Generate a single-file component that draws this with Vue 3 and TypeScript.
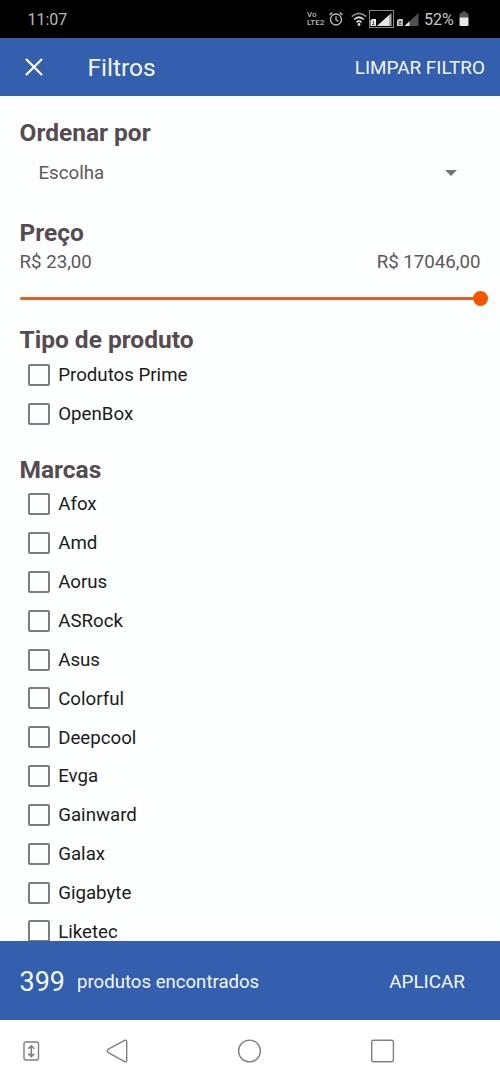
<script setup lang="ts">
import { ref } from 'vue'

interface FilterGroup {
  title: string
  options: string[]
}

const groups: FilterGroup[] = [
  { title: 'Tipo de produto', options: ['Produtos Prime', 'OpenBox'] },
  {
    title: 'Marcas',
    options: [
      'Afox', 'Amd', 'Aorus', 'ASRock', 'Asus', 'Colorful',
      'Deepcool', 'Evga', 'Gainward', 'Galax', 'Gigabyte', 'Liketec',
    ],
  },
]

const selected = ref<string[]>([])

function toggle(option: string): void {
  selected.value = selected.value.includes(option)
    ? selected.value.filter((o) => o !== option)
    : [...selected.value, option]
}
</script>

<template>
  <div class="screen">
    <div class="status">
      <span class="clock">11:07</span>
      <div class="indicators">
        <span class="volte"><span>Vo</span><span>LTE2</span></span>
        <svg class="alarm" width="14" height="16" viewBox="0 0 14 16" fill="none" stroke="#c4c4c4" stroke-width="1.3">
          <circle cx="7" cy="8.5" r="5.5" />
          <path d="M7 5.2v3.6l2.3 1.4M.6 4L3.3 1.6M13.4 4l-2.7-2.4" />
        </svg>
        <svg class="wifi" width="16" height="16" viewBox="0 0 16 16" fill="none" stroke="#dcdcdc" stroke-width="1.7">
          <path d="M.7 5.6Q8-1 15.300 5.600" stroke="#8c8c8c" />
          <path d="M3.200 8.500Q8 4 12.800 8.500M5.500 11.300Q8 9 10.500 11.300" />
          <circle cx="8" cy="13.500" r="1.400" fill="#dcdcdc" stroke="none" />
        </svg>
        <svg class="signals" width="52" height="20" viewBox="0 0 52 20">
          <rect x="1.500" y="1.500" width="24" height="17" fill="none" stroke="#858585" />
          <path d="M9 17L23.500 4V17z" fill="#a8a8a8" />
          <path d="M9 17L21 6.200V17z" fill="#e6e6e6" />
          <path d="M2.500 11.500l1.500-1.500H8V17H2.500z" fill="#ededed" />
          <path d="M4.500 12.300h1V15.500M4 15.500h2.500" fill="none" stroke="#333" stroke-width=".8" />
          <path d="M36.500 17L50.500 4V17z" fill="#505050" />
          <path d="M36.500 17l5-4.700V17z" fill="#e2e2e2" />
          <path d="M29 11.500l1.500-1.500H34.800V17H29z" fill="#d4d4d4" />
          <path d="M30.500 12.300H33v1.500h-2v1.700h2.300" fill="none" stroke="#333" stroke-width=".8" />
        </svg>
        <span class="percent">52%</span>
        <svg class="battery" width="10" height="16" viewBox="0 0 10 16">
          <path d="M3 .5h4V2.300H9.500V7H.5V2.300H3z" fill="#555" />
          <path d="M.5 6.500h9v7q0 1.500-1.500 1.500H2Q.5 15 .5 13.500z" fill="#e6e6e6" />
        </svg>
      </div>
    </div>

    <header class="toolbar">
      <svg class="close" width="18" height="18" viewBox="0 0 18 18" fill="none" stroke="#fff" stroke-width="2.200">
        <path d="M1 1l16 16M17 1L1 17" />
      </svg>
      <span class="title">Filtros</span>
      <button class="clear">LIMPAR FILTRO</button>
    </header>

    <main class="content">
      <section class="sort">
        <h2>Ordenar por</h2>
        <div class="select">
          <span>Escolha</span>
          <svg width="12" height="6" viewBox="0 0 12 6"><path d="M0 0h12L6 6z" fill="#757575" /></svg>
        </div>
      </section>

      <section class="price">
        <h2>Preço</h2>
        <div class="range"><span>R$ 23,00</span><span>R$ 17046,00</span></div>
        <div class="slider"><span class="track"></span><span class="thumb"></span></div>
      </section>

      <section v-for="group in groups" :key="group.title" class="group">
        <h2>{{ group.title }}</h2>
        <div v-for="option in group.options" :key="option" class="option" @click="toggle(option)">
          <span class="box" :class="{ checked: selected.includes(option) }"></span>
          <span class="label">{{ option }}</span>
        </div>
      </section>
    </main>

    <footer class="results">
      <span class="count">399</span>
      <span class="found">produtos encontrados</span>
      <button class="apply">APLICAR</button>
    </footer>

    <nav class="nav">
      <svg width="500" height="62" viewBox="0 0 500 62" fill="none" stroke="#808080" stroke-width="1.400">
        <rect x="24" y="22" width="14.500" height="18" rx="2" />
        <path d="M31.300 26v10.400M28.300 28.800l3-3 3 3M28.300 33.600l3 3 3-3" stroke-width="1.600" />
        <path d="M108 29.400L124.500 20.400Q126.700 19.500 126.700 21.700V40.300Q126.700 42.500 124.500 41.500L108 32.400Q106.500 31 108 29.400z" />
        <circle cx="249.500" cy="31" r="10.900" />
        <rect x="371.700" y="20.300" width="21.700" height="21.500" rx="2" />
      </svg>
    </nav>
  </div>
</template>

<style>
body {
  margin: 0;
}
</style>

<style scoped>
.screen {
  width: 500px;
  height: 1082px;
  display: flex;
  flex-direction: column;
  overflow: hidden;
  background: #fdfefe;
  font-family: Roboto, "Liberation Sans", sans-serif;
  font-size: 18.700px;
  color: #5f575c;
}
.status {
  flex: none;
  height: 37.500px;
  padding: 0 31px 0 27.500px;
  box-sizing: border-box;
  display: flex;
  align-items: center;
  justify-content: space-between;
  background: #000;
  color: #b8b8b8;
  font-size: 16px;
}
.clock {
  padding-top: 2px;
}
.indicators {
  display: flex;
  align-items: center;
  height: 38px;
}
.volte {
  display: flex;
  flex-direction: column;
  width: 18px;
  font-size: 8px;
  line-height: 7.500px;
  font-weight: 500;
  white-space: nowrap;
}
.alarm {
  margin-left: 4px;
}
.wifi {
  margin-left: 8px;
}
.signals {
  margin-left: 1px;
}
.percent {
  margin-left: 4px;
  width: 30px;
  padding-top: 2px;
  color: #c8c8c8;
}
.battery {
  margin-left: 5px;
}
.toolbar {
  flex: none;
  height: 58.200px;
  box-sizing: border-box;
  padding: 1px 15px 0 25px;
  display: flex;
  align-items: center;
  background: #345eae;
  color: #f2f8ff;
}
.title {
  margin-left: 44.500px;
  font-size: 24.500px;
}
button {
  border: 0;
  padding: 0;
  background: none;
  font: inherit;
  font-size: 18.900px;
  color: inherit;
  margin-left: auto;
}
.content {
  flex: 1;
  min-height: 0;
  overflow: hidden;
  padding: 22px 19.500px 0;
}
h2 {
  margin: 0;
  font-size: 24.500px;
  line-height: 30px;
  font-weight: 700;
  color: #564b53;
}
.sort {
  height: 100.500px;
}
.select {
  height: 50px;
  display: flex;
  align-items: center;
  justify-content: space-between;
  padding: 0 23.500px 0 19px;
}
.price {
  height: 107px;
}
.range {
  display: flex;
  justify-content: space-between;
  line-height: 28.500px;
}
.slider {
  height: 14px;
  margin-top: 14.500px;
  display: flex;
  align-items: center;
  margin-right: -7.500px;
}
.track {
  flex: 1;
  height: 3px;
  border-radius: 2px 0 0 2px;
  background: #ea5a1c;
}
.thumb {
  width: 15px;
  height: 15px;
  border-radius: 50%;
  background: #f75400;
}
.group {
  margin-bottom: 21.500px;
}
.option {
  height: 38.850px;
  display: flex;
  align-items: center;
  gap: 8.500px;
  padding-left: 8.200px;
  color: #1b1b1b;
}
.label {
  line-height: 20px;
  padding-top: .6px;
}
.group h2 {
  padding-bottom: .2px;
}
.box {
  width: 22px;
  height: 22px;
  box-sizing: border-box;
  border: 2px solid #7c7c7c;
  border-radius: 2px;
}
.box.checked {
  background: #345eae;
}
.results {
  flex: none;
  height: 78.700px;
  box-sizing: border-box;
  padding: 2px 35px 0 19.500px;
  display: flex;
  align-items: center;
  background: #345eae;
  color: #f2f8ff;
}
.count {
  font-size: 27px;
  padding-top: 1px;
}
.found {
  margin-left: 12px;
  font-size: 18.600px;
}
.nav {
  flex: none;
  height: 62px;
  background: #fff;
}
.nav svg {
  display: block;
}
</style>
